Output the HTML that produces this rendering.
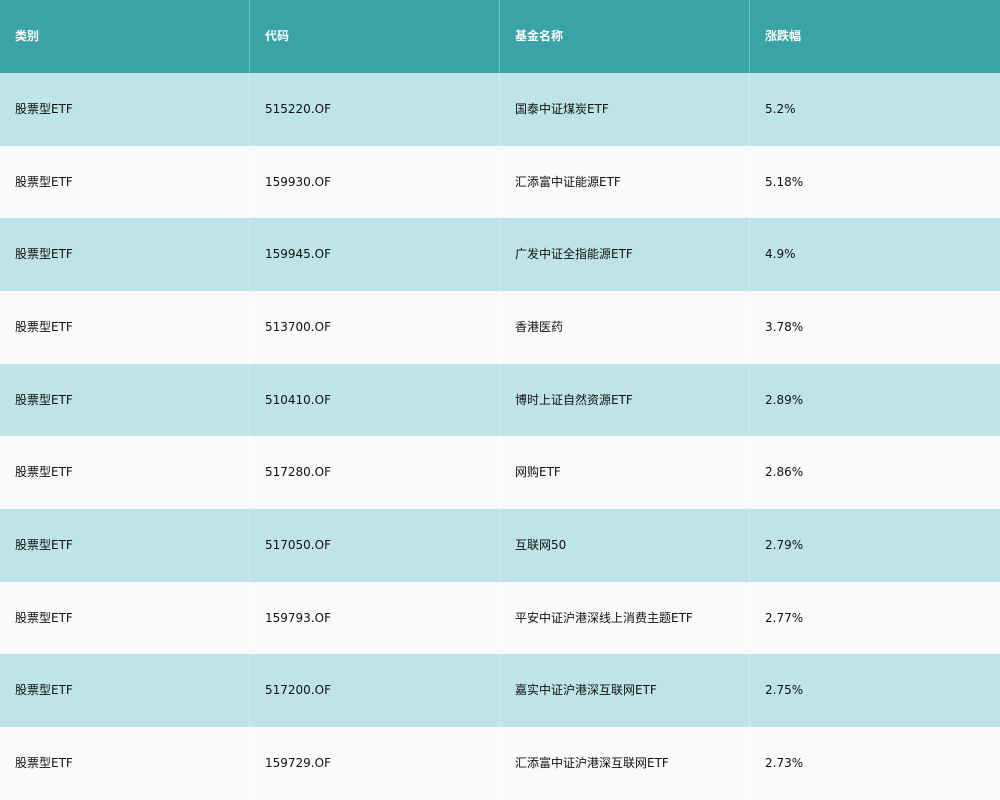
<!DOCTYPE html>
<html><head><meta charset="utf-8"><style>
html,body{margin:0;padding:0;width:1000px;height:800px;overflow:hidden;background:#f8fafc;position:relative}
.r{position:absolute;left:0;width:1000px;height:73px;font-family:"DejaVu Sans","Noto Sans CJK SC",sans-serif;font-size:12px;color:#111}
.h{background:#3aa3a6;color:#fff;font-weight:bold}
.o{background:#bee4e9}
.e{background:#f8fafc}
.c{position:absolute;top:0;height:100%;width:250px;box-sizing:border-box;padding-left:15px;display:flex;align-items:center;line-height:14px;white-space:nowrap}
.c+.c{border-left:1px solid rgba(255,255,255,0.3)}
.c span{display:block;height:14px;margin-top:-1px}
</style></head><body>
<div class="r h" style="top:0;height:73px"><div class="c" style="left:0"><span>类别</span></div><div class="c" style="left:249px"><span>代码</span></div><div class="c" style="left:499px"><span>基金名称</span></div><div class="c" style="left:749px"><span>涨跌幅</span></div></div>
<div class="r o" style="top:73px"><div class="c" style="left:0"><span>股票型ETF</span></div><div class="c" style="left:249px"><span>515220.OF</span></div><div class="c" style="left:499px"><span>国泰中证煤炭ETF</span></div><div class="c" style="left:749px"><span>5.2%</span></div></div>
<div class="r e" style="top:145.5px"><div class="c" style="left:0"><span>股票型ETF</span></div><div class="c" style="left:249px"><span>159930.OF</span></div><div class="c" style="left:499px"><span>汇添富中证能源ETF</span></div><div class="c" style="left:749px"><span>5.18%</span></div></div>
<div class="r o" style="top:218px"><div class="c" style="left:0"><span>股票型ETF</span></div><div class="c" style="left:249px"><span>159945.OF</span></div><div class="c" style="left:499px"><span>广发中证全指能源ETF</span></div><div class="c" style="left:749px"><span>4.9%</span></div></div>
<div class="r e" style="top:291px"><div class="c" style="left:0"><span>股票型ETF</span></div><div class="c" style="left:249px"><span>513700.OF</span></div><div class="c" style="left:499px"><span>香港医药</span></div><div class="c" style="left:749px"><span>3.78%</span></div></div>
<div class="r o" style="top:363.5px"><div class="c" style="left:0"><span>股票型ETF</span></div><div class="c" style="left:249px"><span>510410.OF</span></div><div class="c" style="left:499px"><span>博时上证自然资源ETF</span></div><div class="c" style="left:749px"><span>2.89%</span></div></div>
<div class="r e" style="top:436px"><div class="c" style="left:0"><span>股票型ETF</span></div><div class="c" style="left:249px"><span>517280.OF</span></div><div class="c" style="left:499px"><span>网购ETF</span></div><div class="c" style="left:749px"><span>2.86%</span></div></div>
<div class="r o" style="top:509px"><div class="c" style="left:0"><span>股票型ETF</span></div><div class="c" style="left:249px"><span>517050.OF</span></div><div class="c" style="left:499px"><span>互联网50</span></div><div class="c" style="left:749px"><span>2.79%</span></div></div>
<div class="r e" style="top:581.5px"><div class="c" style="left:0"><span>股票型ETF</span></div><div class="c" style="left:249px"><span>159793.OF</span></div><div class="c" style="left:499px"><span>平安中证沪港深线上消费主题ETF</span></div><div class="c" style="left:749px"><span>2.77%</span></div></div>
<div class="r o" style="top:654px"><div class="c" style="left:0"><span>股票型ETF</span></div><div class="c" style="left:249px"><span>517200.OF</span></div><div class="c" style="left:499px"><span>嘉实中证沪港深互联网ETF</span></div><div class="c" style="left:749px"><span>2.75%</span></div></div>
<div class="r e" style="top:727px"><div class="c" style="left:0"><span>股票型ETF</span></div><div class="c" style="left:249px"><span>159729.OF</span></div><div class="c" style="left:499px"><span>汇添富中证沪港深互联网ETF</span></div><div class="c" style="left:749px"><span>2.73%</span></div></div>
</body></html>
